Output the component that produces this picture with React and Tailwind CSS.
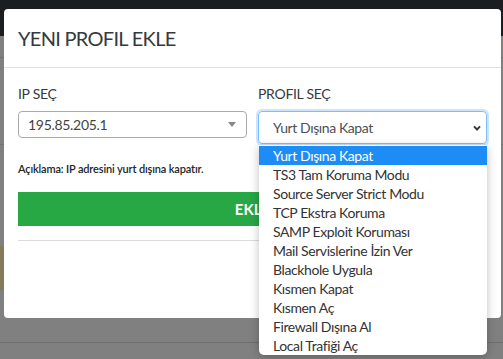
import React from 'react';

const profiles = [
  'Yurt Dışına Kapat',
  'TS3 Tam Koruma Modu',
  'Source Server Strict Modu',
  'TCP Ekstra Koruma',
  'SAMP Exploit Koruması',
  'Mail Servislerine İzin Ver',
  'Blackhole Uygula',
  'Kısmen Kapat',
  'Kısmen Aç',
  'Firewall Dışına Al',
  'Local Trafiği Aç',
];

const App = () => {
  return (
    <div className="relative w-[503px] h-[359px] overflow-hidden bg-[#808080] font-['Lato','Liberation_Sans',sans-serif]">
      {/* dimmed page behind the modal */}
      <div className="h-[36px] bg-[#1b1e21]" />
      <div className="h-[22px] border-b border-[#747475]" />
      <div className="h-[87px] border-b border-[#747475]" />
      <div className="h-[101px]" />
      <div className="h-[44px] w-[4px] bg-[#857b5c]" />
      <div className="h-[53px] border-b border-[#6f6f70]" />

      {/* modal */}
      <div className="absolute left-[4px] top-[9px] w-[497px] h-[309px] bg-white rounded-[4px]">
        <div className="h-[59px] flex items-center px-[14px] border-b border-[#dee2e6]">
          <h4 className="text-[20px] text-[#343a40] tracking-[-0.7px]">YENI PROFIL EKLE</h4>
        </div>
        <div className="px-[14px] pt-[16px]">
          <div className="grid grid-cols-2 gap-x-[11px] items-start">
            <div>
              <label className="block text-[14px] leading-[20px] text-[#343a40] tracking-[-0.3px] mb-[7px]">IP SEÇ</label>
              <div className="h-[27px] flex items-center justify-between pl-[9px] pr-[10px] border border-[#aaa] rounded-[4px] text-[14px] text-[#444] tracking-[-0.3px]">
                <span>195.85.205.1</span>
                <span className="w-0 h-0 border-x-[4px] border-x-transparent border-t-[5px] border-t-[#888]" />
              </div>
            </div>
            <div>
              <label className="block text-[14px] leading-[20px] text-[#343a40] tracking-[-0.3px] mb-[7px]">PROFIL SEÇ</label>
              <div className="h-[33px] flex items-center justify-between pl-[14px] pr-[5px] border border-[#80bdff] rounded-[4px] shadow-[0_0_0_2px_rgba(0,123,255,0.2)] text-[14px] text-[#495057] tracking-[-0.4px]">
                <span>Yurt Dışına Kapat</span>
                <svg width="8" height="6" viewBox="0 0 8 6" fill="none">
                  <path d="M1 1.3 L4 4.5 L7 1.3" stroke="#343a40" strokeWidth="1.9" />
                </svg>
              </div>
            </div>
          </div>
          <p className="mt-[17px] text-[11px] leading-[16px] font-semibold text-[#212529] tracking-[-0.15px]">
            Açıklama: IP adresini yurt dışına kapatır.
          </p>
          <button className="mt-[15px] w-full h-[34px] bg-[#28a745] text-white text-[15px] font-bold">
            EKLE
          </button>
          <div className="mt-[14px] border-t border-[#ddd]" />
        </div>
      </div>

      {/* open select list */}
      <ul className="absolute left-[259px] top-[145px] w-[228px] h-[210px] bg-white rounded-b-[5px] shadow-[0_2px_10px_rgba(0,0,0,0.25)] pt-[1px] overflow-hidden">
        {profiles.map((p, i) => (
          <li
            key={p}
            className={
              i === 0
                ? 'h-[19px] leading-[19px] pl-[14px] text-[14px] tracking-[-0.4px] bg-[#1e8cf5] text-white'
                : 'h-[19px] leading-[19px] pl-[14px] text-[14px] tracking-[-0.4px] text-[#333]'
            }
          >
            {p}
          </li>
        ))}
      </ul>
    </div>
  );
};

export default App;
